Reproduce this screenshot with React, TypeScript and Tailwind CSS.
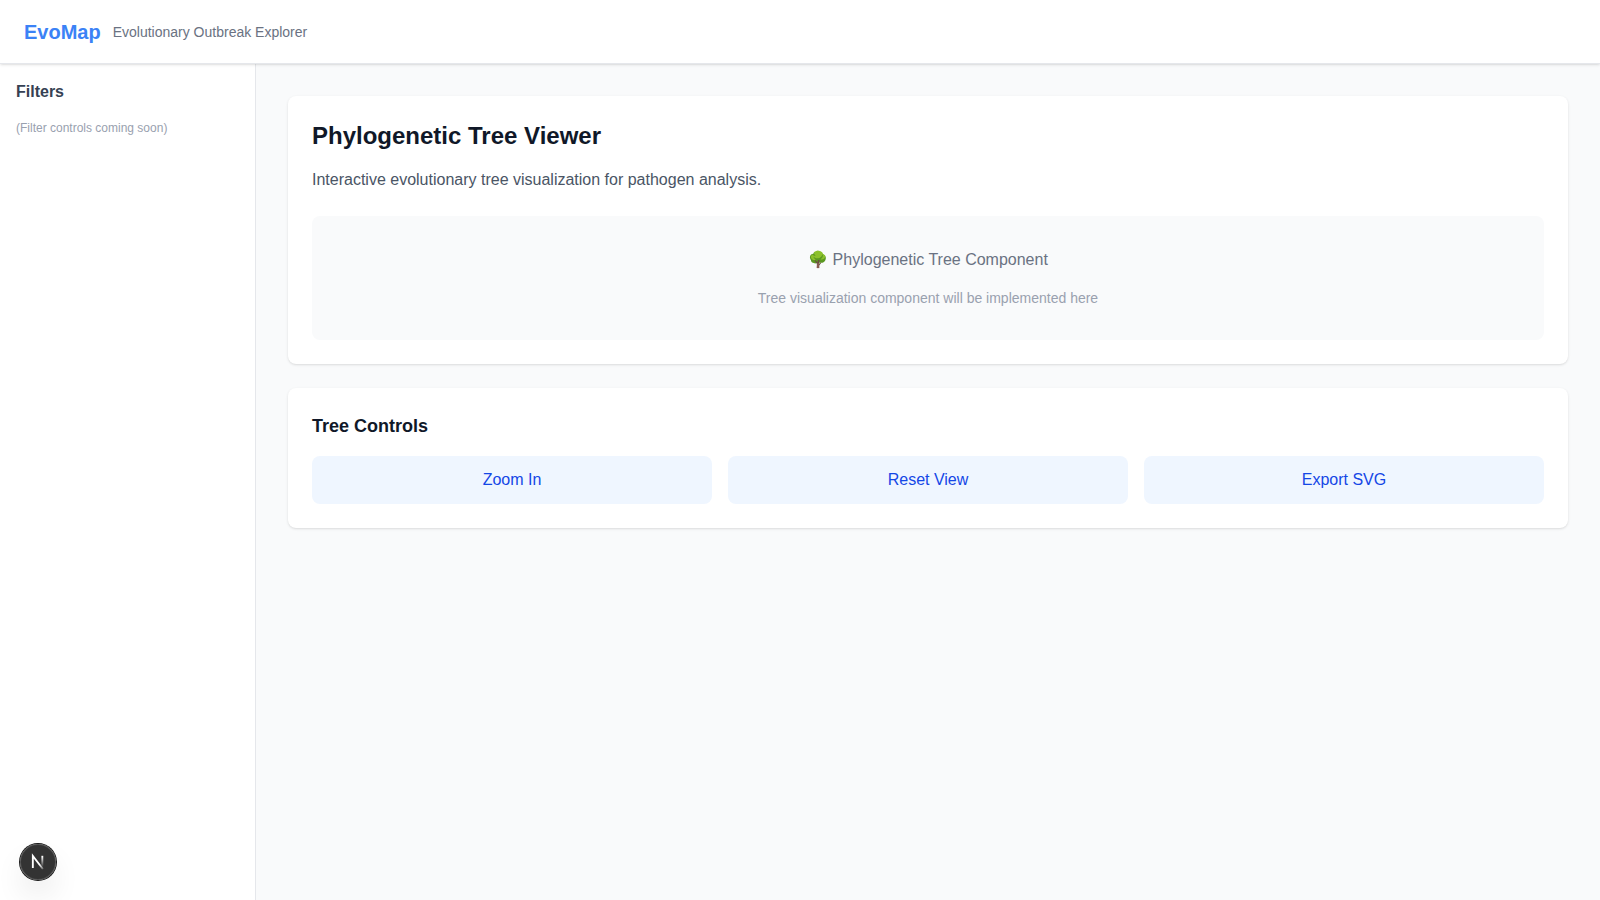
const treeActions = ["Zoom In", "Reset View", "Export SVG"];

function Header() {
  return (
    <header className="relative z-10 flex h-16 items-center gap-3 border-b border-gray-200 bg-white px-6 shadow-sm">
      <span className="text-xl font-bold text-[#3b82f6]">EvoMap</span>
      <span className="text-sm text-gray-500">Evolutionary Outbreak Explorer</span>
    </header>
  );
}

function Sidebar() {
  return (
    <aside className="w-64 shrink-0 border-r border-gray-200 bg-white p-4">
      <h2 className="mb-4 font-semibold text-gray-700">Filters</h2>
      <p className="text-xs text-gray-400">(Filter controls coming soon)</p>
    </aside>
  );
}

function TreeViewer() {
  return (
    <section className="rounded-lg bg-white p-6 shadow-sm">
      <h1 className="mb-4 text-2xl font-bold text-gray-900">Phylogenetic Tree Viewer</h1>
      <p className="mb-6 text-gray-600">
        Interactive evolutionary tree visualization for pathogen analysis.
      </p>
      <div className="rounded-lg bg-gray-50 p-8 text-center">
        <p className="text-gray-500">🌳 Phylogenetic Tree Component</p>
        <p className="mt-4 text-sm text-gray-400">
          Tree visualization component will be implemented here
        </p>
      </div>
    </section>
  );
}

function TreeControls() {
  return (
    <section className="rounded-lg bg-white p-6 shadow-sm">
      <h2 className="mb-4 text-lg font-semibold text-gray-900">Tree Controls</h2>
      <div className="grid grid-cols-1 gap-4 md:grid-cols-3">
        {treeActions.map((label) => (
          <button
            key={label}
            type="button"
            className="rounded-lg bg-blue-50 px-4 py-3 text-blue-700 hover:bg-blue-100"
          >
            {label}
          </button>
        ))}
      </div>
    </section>
  );
}

function DevIndicator() {
  return (
    <button
      type="button"
      aria-label="Open developer tools"
      className="fixed bottom-5 left-5 z-20 size-9 rounded-full bg-black/80 shadow-[0_0_0_1px_#171717,inset_0_0_0_1px_rgba(255,255,255,0.14),0_16px_32px_-8px_rgba(0,0,0,0.24)]"
    >
      <svg viewBox="0 0 36 36" fill="none" className="size-9" aria-hidden="true">
        <defs>
          <linearGradient id="diagonal" x1="9" y1="9.6" x2="12.8" y2="14.5" gradientUnits="userSpaceOnUse">
            <stop stopColor="white" />
            <stop offset="1" stopColor="white" stopOpacity="0.2" />
          </linearGradient>
          <linearGradient id="stem" x1="11.8" y1="1.4" x2="11.8" y2="12" gradientUnits="userSpaceOnUse">
            <stop stopColor="white" />
            <stop offset="1" stopColor="white" stopOpacity="0" />
          </linearGradient>
        </defs>
        <g transform="translate(10.5 11)" strokeWidth="1.86">
          <path d="M12.4 14 L2.34 1 V13.1" stroke="url(#diagonal)" />
          <path d="M11.825 0.8 V13.1" stroke="url(#stem)" />
        </g>
      </svg>
    </button>
  );
}

export default function App() {
  return (
    <div className="flex min-h-screen flex-col bg-gray-50 font-[Arial,Helvetica,sans-serif]">
      <Header />
      <div className="flex flex-1">
        <Sidebar />
        <main className="flex min-w-0 flex-1 flex-col gap-6 p-8">
          <TreeViewer />
          <TreeControls />
        </main>
      </div>
      <DevIndicator />
    </div>
  );
}
